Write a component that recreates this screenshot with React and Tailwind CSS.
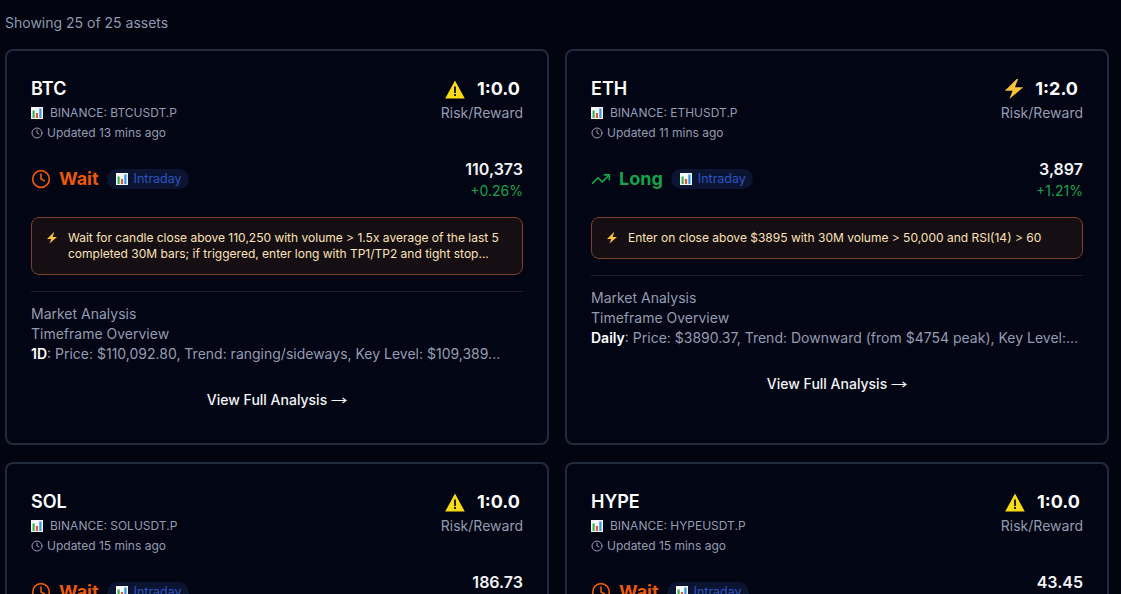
import { Clock, TrendingUp } from 'lucide-react';

const assets = [
  {
    name: 'BTC',
    symbol: 'BINANCE: BTCUSDT.P',
    updated: 'Updated 13 mins ago',
    ratio: '1:0.0',
    risk: 'warn',
    action: 'Wait',
    price: '110,373',
    change: '+0.26%',
    note: 'Wait for candle close above 110,250 with volume > 1.5x average of the last 5 completed 30M bars; if triggered, enter long with TP1/TP2 and tight stop...',
    frame: '1D',
    overview: ': Price: $110,092.80, Trend: ranging/sideways, Key Level: $109,389...',
  },
  {
    name: 'ETH',
    symbol: 'BINANCE: ETHUSDT.P',
    updated: 'Updated 11 mins ago',
    ratio: '1:2.0',
    risk: 'bolt',
    action: 'Long',
    price: '3,897',
    change: '+1.21%',
    note: 'Enter on close above $3895 with 30M volume > 50,000 and RSI(14) > 60',
    frame: 'Daily',
    overview: ': Price: $3890.37, Trend: Downward (from $4754 peak), Key Level:...',
  },
  {
    name: 'SOL',
    symbol: 'BINANCE: SOLUSDT.P',
    updated: 'Updated 15 mins ago',
    ratio: '1:0.0',
    risk: 'warn',
    action: 'Wait',
    price: '186.73',
    change: '+0.31%',
    note: 'Wait for candle close above the key level with rising volume',
    frame: '1D',
    overview: ': Price: $186.50, Trend: ranging/sideways',
  },
  {
    name: 'HYPE',
    symbol: 'BINANCE: HYPEUSDT.P',
    updated: 'Updated 15 mins ago',
    ratio: '1:0.0',
    risk: 'warn',
    action: 'Wait',
    price: '43.45',
    change: '+0.42%',
    note: 'Wait for candle close above the key level with rising volume',
    frame: '1D',
    overview: ': Price: $43.40, Trend: ranging/sideways',
  },
];

function ChartEmoji() {
  return (
    <svg width="12" height="12" viewBox="0 0 12 12" className="shrink-0">
      <rect width="12" height="12" fill="#f4f6f8" />
      <rect x="1.5" y="3.5" width="2.2" height="7.5" fill="#35b558" />
      <rect x="4.9" y="6" width="2.2" height="5" fill="#e8533c" />
      <rect x="8.3" y="1.5" width="2.2" height="9.5" fill="#2f96e8" />
    </svg>
  );
}

function Bolt({ size = 12 }) {
  return (
    <svg width={size} height={size} viewBox="0 0 24 24" className="shrink-0">
      <path d="M15 1 2 14h8.5L7 23l15-13h-9l3.5-9H15Z" fill="#fcc23a" />
    </svg>
  );
}

function Warn() {
  return (
    <svg width="20" height="19" viewBox="0 0 20 19" className="shrink-0">
      <path d="M10 .5 19.8 18.5H.2L10 .5Z" fill="#fbdc14" />
      <rect x="9" y="6.5" width="2" height="6.5" fill="#222" />
      <rect x="9" y="14" width="2" height="2" fill="#222" />
    </svg>
  );
}

function AssetCard({ asset }) {
  const waiting = asset.action === 'Wait';
  return (
    <div className="h-[396px] rounded-lg border-2 border-[#232a3b] bg-[#020514] p-6">
      <div className="flex justify-between">
        <div>
          <h3 className="text-lg leading-7 font-semibold text-white">{asset.name}</h3>
          <div className="mt-[2px] flex items-center gap-[7px] text-xs leading-4 text-[#949cb0]">
            <ChartEmoji />
            <span>{asset.symbol}</span>
          </div>
          <div className="mt-1 flex items-center gap-1 text-xs leading-4 text-[#949cb0]">
            <Clock size={12} />
            <span>{asset.updated}</span>
          </div>
        </div>
        <div className="text-right">
          {asset.risk === 'warn' ? (
            <div className="flex h-7 items-center justify-end gap-3 pr-[3px] text-lg font-bold text-white">
              <Warn />
              <span>{asset.ratio}</span>
            </div>
          ) : (
            <div className="flex h-7 items-center justify-end gap-[10px] pr-[5px] text-lg font-bold text-white">
              <Bolt size={22} />
              <span>{asset.ratio}</span>
            </div>
          )}
          <p className="text-sm leading-5 text-[#949cb0]">Risk/Reward</p>
        </div>
      </div>

      <div className="mt-4 flex items-center justify-between">
        <div className="flex items-center">
          {waiting ? (
            <Clock size={20} strokeWidth={2} className="text-[#ea580c]" />
          ) : (
            <TrendingUp size={20} strokeWidth={2} className="text-[#16a34a]" />
          )}
          <span className={`ml-2 text-lg leading-7 font-bold ${waiting ? 'text-[#ea580c]' : 'text-[#16a34a]'}`}>
            {asset.action}
          </span>
          <span className="ml-2 flex h-5 items-center gap-[6px] rounded-full bg-[#0b1430] pr-[7px] pl-[9px] text-[12.5px] text-[#2c55c4]">
            <ChartEmoji />
            Intraday
          </span>
        </div>
        <div className="text-right">
          <div className="text-base leading-6 font-semibold text-[#f3f4f6]">{asset.price}</div>
          <div className="text-sm leading-5 text-[#16a34a]">{asset.change}</div>
        </div>
      </div>

      <div className="mt-4 flex gap-[10px] rounded-lg border border-[#7c4128] bg-[#150f14] px-[14px] py-3">
        <span className="flex h-4 items-center">
          <Bolt />
        </span>
        <p className="text-xs leading-4 text-[#fde3b5]">{asset.note}</p>
      </div>

      <div className="mt-4 border-t border-[#1c2130] pt-3 text-sm leading-5 text-[#949cb0]">
        <p>Market Analysis</p>
        <p>Timeframe Overview</p>
        <p className="truncate">
          <strong className="font-semibold text-white">{asset.frame}</strong>
          {asset.overview}
        </p>
      </div>

      <div className="mt-[26px] flex justify-center gap-1 text-sm leading-5 font-medium text-[#f3f4f6]">
        <span>View Full Analysis</span>
        <svg width="16" height="20" viewBox="0 0 16 20" fill="none" stroke="#f3f4f6" strokeWidth="1.2">
          <path d="M0.5 10.5H15M11.5 8l3.5 2.5-3.5 2.5" />
        </svg>
      </div>
    </div>
  );
}

export default function App() {
  return (
    <div className="h-[594px] overflow-hidden bg-[#02040f] pr-3 pl-[5px] font-['Inter',sans-serif]">
      <p className="pt-[13px] pb-4 text-sm leading-5 text-[#8d99ae]">Showing 25 of 25 assets</p>
      <div className="grid grid-cols-2 gap-x-4 gap-y-[17px]">
        {assets.map((asset) => (
          <AssetCard key={asset.name} asset={asset} />
        ))}
      </div>
    </div>
  );
}
